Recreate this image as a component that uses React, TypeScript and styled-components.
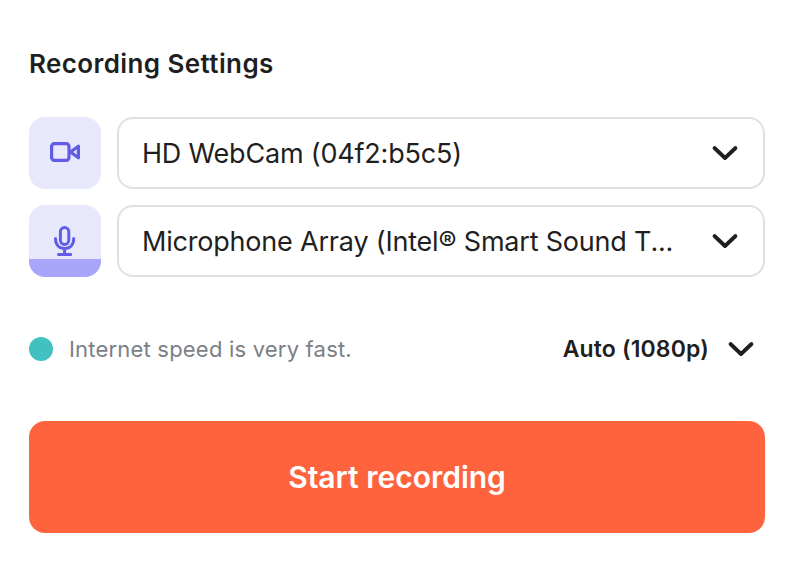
import styled, { createGlobalStyle } from "styled-components";

const GlobalStyle = createGlobalStyle`
	html, body {
		margin: 0;
		padding: 0;
		background: #ffffff;
	}
	body {
		font-family: "Inter", "Noto Sans", sans-serif;
	}
`;

const Chevron = ({ size = 28 }: { size?: number }) => (
	<svg width={size} height={size} viewBox="0 0 28 28" fill="none">
		<path
			d="M3.5 9 L14 19 L24.5 9"
			stroke="#1f1f1f"
			strokeWidth="3.8"
			strokeLinecap="round"
			strokeLinejoin="round"
		/>
	</svg>
);

const App = () => {
	return (
		<Page>
			<GlobalStyle />
			<Title>Recording Settings</Title>
			<Devices>
				<DeviceRow>
					<IconTile>
						<svg width="32" height="24" viewBox="0 0 32 24" fill="none">
							<rect x="2.6" y="2.6" width="17.4" height="16.8" rx="3" stroke="#5f5ce8" strokeWidth="3.2" />
							<path
								d="M21.5 11 L29.4 5.2 V16.8 Z"
								stroke="#5f5ce8"
								strokeWidth="3.2"
								strokeLinejoin="round"
							/>
						</svg>
					</IconTile>
					<Select>
						<SelectText>HD WebCam (04f2:b5c5)</SelectText>
						<Chevron />
					</Select>
				</DeviceRow>
				<DeviceRow>
					<IconTile>
						<LevelBar />
						<MicIcon width="24" height="32" viewBox="0 0 24 32" fill="none">
							<rect x="7.4" y="2.5" width="8.4" height="17" rx="4.2" stroke="#5f5ce8" strokeWidth="3" />
							<path
								d="M2.5 13.5 C2.5 19.5 6 23.5 11.6 23.5 C17.2 23.5 20.7 19.5 20.7 13.5 M11.6 23.5 V29.5 M5.5 29.5 H17.7"
								stroke="#5f5ce8"
								strokeWidth="3"
								strokeLinecap="round"
							/>
						</MicIcon>
					</IconTile>
					<Select>
						<SelectText>Microphone Array (Intel® Smart Sound T...</SelectText>
						<Chevron />
					</Select>
				</DeviceRow>
			</Devices>
			<StatusRow>
				<Status>
					<StatusDot />
					<StatusText>Internet speed is very fast.</StatusText>
				</Status>
				<Quality>
					<QualityText>Auto (1080p)</QualityText>
					<Chevron />
				</Quality>
			</StatusRow>
			<StartButton>Start recording</StartButton>
		</Page>
	);
};

const Page = styled.div`
	width: 792px;
	height: 570px;
	box-sizing: border-box;
	padding: 47px 27px 0 29px;
	display: flex;
	flex-direction: column;
	overflow: hidden;
`;

const Title = styled.h1`
	margin: 0;
	font-size: 26px;
	line-height: 34px;
	font-weight: 600;
	letter-spacing: 0.4px;
	color: #1f1f1f;
`;

const Devices = styled.div`
	margin-top: 36px;
	display: flex;
	flex-direction: column;
	gap: 16px;
`;

const DeviceRow = styled.div`
	display: flex;
	gap: 16px;
	height: 72px;
`;

const IconTile = styled.div`
	position: relative;
	width: 72px;
	height: 72px;
	border-radius: 16px;
	background: #e8e8fd;
	overflow: hidden;
	display: flex;
	align-items: center;
	justify-content: center;
`;

const LevelBar = styled.div`
	position: absolute;
	left: 0;
	right: 0;
	bottom: 0;
	height: 18px;
	background: #a8a6fa;
`;

const MicIcon = styled.svg`
	position: relative;
`;

const Select = styled.div`
	flex: 1;
	box-sizing: border-box;
	border: 2px solid #e0e0e0;
	border-radius: 16px;
	background: #ffffff;
	padding: 0 24px 0 23px;
	display: flex;
	align-items: center;
	justify-content: space-between;
`;

const SelectText = styled.span`
	font-size: 27px;
	letter-spacing: -0.2px;
	color: #1f1f1f;
	white-space: nowrap;
`;

const StatusRow = styled.div`
	margin-top: 54px;
	height: 36px;
	display: flex;
	align-items: center;
	justify-content: space-between;
	padding-right: 10px;
`;

const Status = styled.div`
	display: flex;
	align-items: center;
	gap: 16px;
`;

const StatusDot = styled.span`
	width: 24px;
	height: 24px;
	border-radius: 50%;
	background: #43c1c1;
`;

const StatusText = styled.span`
	font-size: 22px;
	letter-spacing: 0.2px;
	color: #7b7f86;
`;

const Quality = styled.div`
	display: flex;
	align-items: center;
	gap: 18px;
`;

const QualityText = styled.span`
	font-size: 23px;
	font-weight: 600;
	letter-spacing: 0.15px;
	color: #1f1f1f;
`;

const StartButton = styled.button`
	margin-top: 54px;
	width: 100%;
	height: 112px;
	border: none;
	border-radius: 16px;
	background: #ff633e;
	color: #ffffff;
	font-family: inherit;
	font-size: 30px;
	font-weight: 600;
`;

export default App;
